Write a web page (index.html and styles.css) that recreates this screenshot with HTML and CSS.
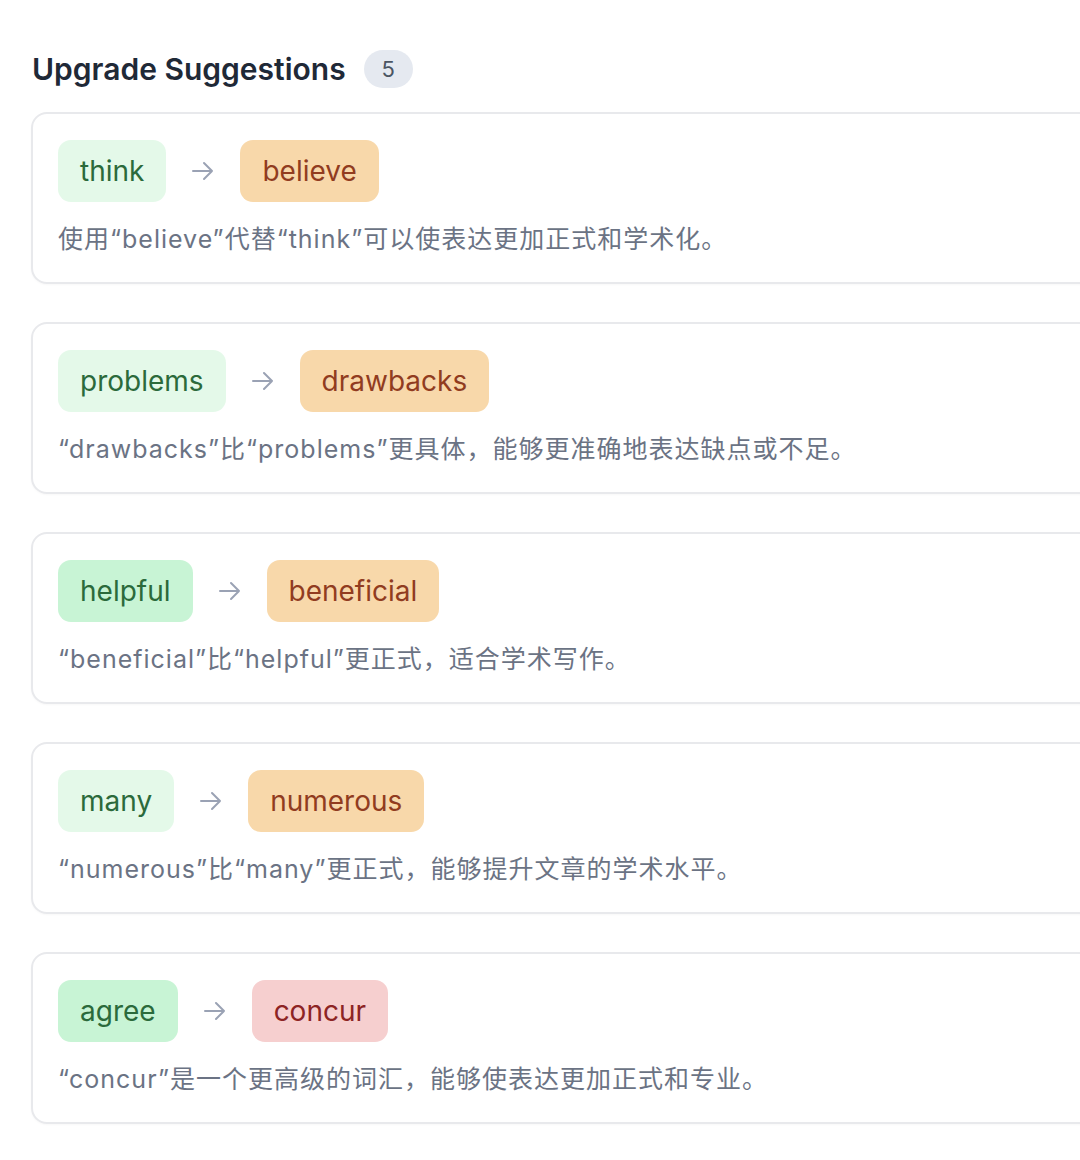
FILE: index.html
```html
<!DOCTYPE html>
<html lang="zh-CN">
<head>
    <meta charset="UTF-8">
    <meta name="viewport" content="width=device-width, initial-scale=1.0">
    <title>Upgrade Suggestions</title>
    <link rel="stylesheet" href="styles.css">
</head>
<body>
    <div class="panel">
        <div class="panel-header">
            <h2 class="panel-title">Upgrade Suggestions</h2>
            <span class="count">5</span>
        </div>

        <div class="suggestion">
            <div class="pair">
                <span class="tag from">think</span>
                <svg class="arrow" viewBox="0 0 26 26"><path d="M3 13h19M14 5l8 8-8 8"/></svg>
                <span class="tag to-orange">believe</span>
            </div>
            <p class="reason">使用“believe”代替“think”可以使表达更加正式和学术化。</p>
        </div>

        <div class="suggestion">
            <div class="pair">
                <span class="tag from">problems</span>
                <svg class="arrow" viewBox="0 0 26 26"><path d="M3 13h19M14 5l8 8-8 8"/></svg>
                <span class="tag to-orange">drawbacks</span>
            </div>
            <p class="reason">“drawbacks”比“problems”更具体，能够更准确地表达缺点或不足。</p>
        </div>

        <div class="suggestion">
            <div class="pair">
                <span class="tag from strong">helpful</span>
                <svg class="arrow" viewBox="0 0 26 26"><path d="M3 13h19M14 5l8 8-8 8"/></svg>
                <span class="tag to-orange">beneficial</span>
            </div>
            <p class="reason">“beneficial”比“helpful”更正式，适合学术写作。</p>
        </div>

        <div class="suggestion">
            <div class="pair">
                <span class="tag from">many</span>
                <svg class="arrow" viewBox="0 0 26 26"><path d="M3 13h19M14 5l8 8-8 8"/></svg>
                <span class="tag to-orange">numerous</span>
            </div>
            <p class="reason">“numerous”比“many”更正式，能够提升文章的学术水平。</p>
        </div>

        <div class="suggestion">
            <div class="pair">
                <span class="tag from strong">agree</span>
                <svg class="arrow" viewBox="0 0 26 26"><path d="M3 13h19M14 5l8 8-8 8"/></svg>
                <span class="tag to-red">concur</span>
            </div>
            <p class="reason">“concur”是一个更高级的词汇，能够使表达更加正式和专业。</p>
        </div>
    </div>
</body>
</html>
```

FILE: styles.css
```css
body {
    margin: 0;
    background: #ffffff;
    font-family: Inter, "Noto Sans CJK SC", sans-serif;
    overflow: hidden;
}
.panel {
    padding: 50px 0 0 31px;
    width: 1100px;
}
.panel-header {
    display: flex;
    align-items: center;
    gap: 18px;
    margin-bottom: 24px;
}
.panel-title {
    margin: 0;
    font-size: 30px;
    font-weight: 600;
    color: #1f2937;
    padding-left: 1px;
}
.count {
    background: #e5e9f0;
    color: #4b5563;
    font-size: 22px;
    line-height: 38px;
    padding: 0 18px;
    border-radius: 19px;
}
.suggestion {
    border: 2px solid #e8e9ec;
    border-radius: 16px;
    padding: 26px 25px 25px;
    margin-bottom: 38px;
    box-shadow: 0 1px 2px rgba(0, 0, 0, 0.03);
}
.pair {
    display: flex;
    align-items: center;
    gap: 24px;
}
.tag {
    font-size: 28px;
    line-height: 34px;
    padding: 14px 22px;
    border-radius: 13px;
}
.from {
    background: #e4f9e9;
    color: #2b6a3b;
}
.from.strong {
    background: #c8f4d5;
}
.to-orange {
    background: #f8d8aa;
    color: #913c1f;
}
.to-red {
    background: #f6cfcf;
    color: #8d2424;
}
.arrow {
    width: 26px;
    height: 26px;
    fill: none;
    stroke: #9aa2b4;
    stroke-width: 2;
    stroke-linecap: round;
    stroke-linejoin: round;
}
.reason {
    margin: 19px 0 0;
    font-size: 25px;
    line-height: 36px;
    letter-spacing: 1px;
    color: #6b7384;
}
```
